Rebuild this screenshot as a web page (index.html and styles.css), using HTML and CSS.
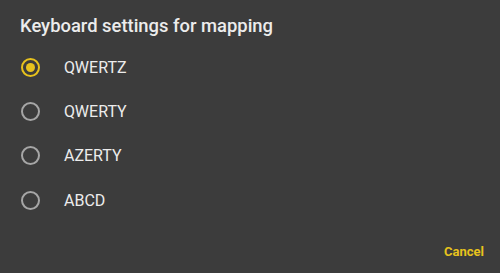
FILE: index.html
```html
<!DOCTYPE html>
<html>
<head>
<meta charset="utf-8">
<link rel="stylesheet" href="styles.css">
</head>
<body>
<div class="dialog">
  <h1 class="title">Keyboard settings for mapping</h1>
  <ul class="options">
    <li class="option checked"><span class="radio"></span><span class="label">QWERTZ</span></li>
    <li class="option"><span class="radio"></span><span class="label">QWERTY</span></li>
    <li class="option"><span class="radio"></span><span class="label">AZERTY</span></li>
    <li class="option"><span class="radio"></span><span class="label">ABCD</span></li>
  </ul>
  <div class="actions"><span class="btn">Cancel</span></div>
</div>
</body>
</html>
```

FILE: styles.css
```css
* { box-sizing: border-box; }
html, body { margin: 0; padding: 0; }
body {
  width: 500px;
  height: 273px;
  background: #3c3c3c;
  font-family: Roboto, "Liberation Sans", sans-serif;
  overflow: hidden;
}
.dialog {
  display: flex;
  flex-direction: column;
  height: 273px;
  padding: 14px 0 0 0;
}
.title {
  margin: 0 0 0 20px;
  font-size: 18.4px;
  font-weight: 500;
  color: #ececec;
  line-height: 24px;
}
.options {
  list-style: none;
  margin: 7px 0 0 0;
  padding: 0;
}
.option {
  display: flex;
  align-items: center;
  height: 44.4px;
  padding-left: 21px;
}
.radio {
  width: 19px;
  height: 19px;
  border-radius: 50%;
  border: 2px solid #a6a6a6;
  display: flex;
  align-items: center;
  justify-content: center;
}
.option.checked .radio { border-color: #e7c21d; }
.option.checked .radio::after {
  content: "";
  width: 9px;
  height: 9px;
  border-radius: 50%;
  background: #e7c21d;
}
.label {
  margin-left: 24px;
  font-size: 16px;
  color: #ececec;
}
.actions {
  margin-top: auto;
  display: flex;
  justify-content: flex-end;
  padding: 0 16px 14px 0;
}
.btn {
  font-size: 13px;
  font-weight: 700;
  color: #e7c21d;
}
```
